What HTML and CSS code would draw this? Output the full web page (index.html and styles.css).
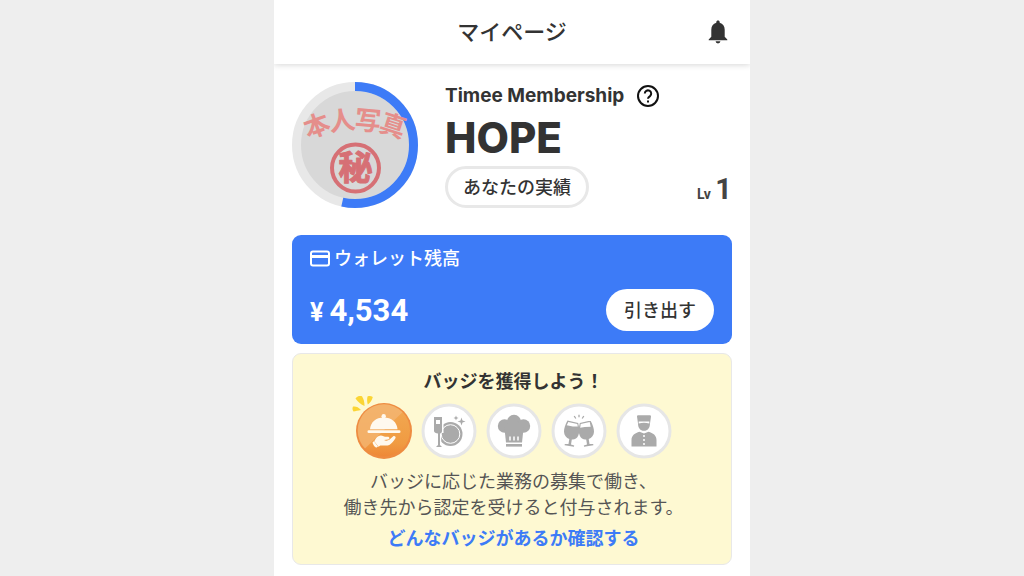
FILE: index.html
```html
<!DOCTYPE html>
<html lang="ja">
<head>
  <meta charset="UTF-8">
  <meta name="viewport" content="width=device-width, initial-scale=1">
  <title>マイページ</title>
  <link rel="stylesheet" href="styles.css">
</head>
<body>
  <div class="app">
    <header class="header">
      <h1 class="header-title">マイページ</h1>
      <button class="bell" type="button" aria-label="お知らせ">
        <svg viewBox="0 0 20 24" width="20" height="24">
          <path d="M10 0.5c1 0 1.700.7 1.700 1.700v.6c3.200.8 5 3.500 5 6.900v7.100l2.600 2.600v.9H.7v-.9l2.600-2.600V9.700c0-3.400 1.800-6.100 5-6.900v-.6c0-1 .7-1.700 1.700-1.700z M7.600 21.300h4.800a2.400 2.100 0 0 1-4.800 0z"/>
        </svg>
      </button>
    </header>

    <main class="content">
      <section class="profile">
        <svg class="avatar" viewBox="0 0 126 126" role="img" aria-label="本人写真">
          <circle class="avatar-photo" cx="63" cy="63" r="55"/>
          <circle class="avatar-track" cx="63" cy="63" r="58.500"/>
          <circle class="avatar-progress" cx="63" cy="63" r="58.500" pathLength="100" stroke-dasharray="53.500 100" transform="rotate(-90 63 63)"/>
          <g class="avatar-name">
            <text transform="translate(25 44) rotate(-20)" dy="9">本</text>
            <text transform="translate(50 39) rotate(-7)" dy="9">人</text>
            <text transform="translate(76 39) rotate(5)" dy="9">写</text>
            <text transform="translate(101 44) rotate(18)" dy="9">真</text>
          </g>
          <circle class="seal-ring" cx="63.500" cy="86" r="23.500"/>
          <text class="seal-text" x="63.500" y="98">秘</text>
        </svg>

        <div class="membership">
          <div class="membership-label">
            <span>Timee Membership</span>
            <button class="help" type="button" aria-label="ヘルプ">
              <svg viewBox="0 0 24 24" width="24" height="24">
                <circle cx="12" cy="12" r="10"/>
                <path d="M8.800 9.600a3.200 3.200 0 1 1 5.200 2.500c-1.200.9-2 1.500-2 2.700"/>
                <path d="M12 16.400v2"/>
              </svg>
            </button>
          </div>
          <p class="rank">HOPE</p>
          <button class="pill pill-outline" type="button">あなたの実績</button>
        </div>

        <p class="level"><span class="level-label">Lv</span> <span class="level-value">1</span></p>
      </section>

      <section class="wallet">
        <h2 class="wallet-title">
          <svg viewBox="0 0 20 18" width="20" height="18">
            <rect x="1" y="1.500" width="18" height="14" rx="2"/>
            <path class="card-stripe" d="M1 6.500h18"/>
          </svg>
          ウォレット残高
        </h2>
        <div class="wallet-row">
          <p class="amount"><span class="yen">¥</span>4,534</p>
          <button class="pill pill-white" type="button">引き出す</button>
        </div>
      </section>

      <section class="badges">
        <h2 class="badges-title">バッジを獲得しよう！</h2>
        <ul class="badge-list">
          <li class="badge badge-active">
            <svg viewBox="0 0 56 56" role="img" aria-label="ホール">
              <defs>
                <linearGradient id="orange" x1="0" y1="0" x2="0" y2="1">
                  <stop offset="0" stop-color="#f2a953"/>
                  <stop offset="0.750" stop-color="#f09b42"/>
                  <stop offset="1" stop-color="#ee8837"/>
                </linearGradient>
              </defs>
              <circle cx="28" cy="28" r="28" fill="#ee8c41"/>
              <circle cx="28" cy="27.500" r="26" fill="url(#orange)"/>
              <path d="M9 45.500A26 26 0 0 1 46.500 9.200z" fill="#f4b877" opacity="0.700"/>
              <g fill="#fff9ee">
                <circle cx="27.700" cy="13.300" r="2.200"/>
                <path d="M14 26.300C14.500 19 20 14.500 27.700 14.500S41 19 41.500 26.300z"/>
                <rect x="11.500" y="27.300" width="33" height="2.700" rx="1.300"/>
                <path d="M20 35.200c2.200-2.800 5-3.300 7.500-2 1.300.6 2.700.5 4.300.5 2 0 2.200 2.500.3 2.800l-4 .6c1.800 1 4 .6 5.500-.6l3.400-3c1.400-1.200 3.500.4 2.300 2-1.800 2.700-3.700 5.200-6 6.400-2.600 1.200-6.500.2-9 .6l-1.800 1.200-4.300-5.500z"/>
                <path d="M16.600 39.200l1.400-1 4 5.400-1.400 1c-1.800-.3-3.800-2.900-4-5.400z"/>
              </g>
            </svg>
            <svg class="sparkle" viewBox="0 0 22 18" width="22" height="18" aria-hidden="true">
              <path d="M1 11.500c2.700-.5 5.500.5 8 3.500-3 .6-5.500 1-7.500 1.500-1.200-1.500-1.300-3.500-.5-5z"/>
              <path d="M3.500 3.500C5.500 1 7.500.8 10 1.200c1.800 3 2.500 6 2.500 9.800-3.500-1.500-6.500-4-9-7.500z"/>
              <path d="M15.500 1.500c2-.7 3.700-.5 5.300.5-.8 3-2.300 5.500-5 7.500-.8-2.500-.9-5.200-.3-8z"/>
            </svg>
          </li>
          <li class="badge">
            <svg viewBox="0 0 56 56" role="img" aria-label="洗い場">
              <circle class="badge-ring" cx="28" cy="28" r="26"/>
              <g class="badge-icon">
                <circle cx="29.500" cy="31" r="12"/>
                <circle cx="29.500" cy="31" r="9.300" fill="none" stroke="#fff" stroke-width="1"/>
                <path d="M11.500 13h11v17h-2.300v15h-6.400V30h-2.300z" fill="#fff"/>
                <path d="M13 14h8v14c0 1.500-1 2.300-2 2.600V42l2 2h-6l2-2V30.600c-2-.3-4-1.100-4-2.600z"/>
                <rect x="15" y="17" width="4" height="4" fill="#fff"/>
                <path d="M35 12.500l.7 1.800 1.800.7-1.800.7-.7 1.800-.7-1.800-1.800-.7 1.800-.7z"/>
                <path d="M40.500 14.500l1 3 3 1-3 1-1 3-1-3-3-1 3-1z"/>
              </g>
            </svg>
          </li>
          <li class="badge">
            <svg viewBox="0 0 56 56" role="img" aria-label="調理">
              <circle class="badge-ring" cx="28" cy="28" r="26"/>
              <g class="badge-icon">
                <circle cx="18.500" cy="23" r="6.700"/>
                <circle cx="28" cy="19" r="7.200"/>
                <circle cx="37.500" cy="23" r="6.700"/>
                <path d="M18 21h20l-2 18.500H20z"/>
                <rect x="20" y="41" width="16" height="2.600"/>
                <path d="M24 33.500v4M28 33.500v4M32 33.500v4" stroke="#fff" stroke-width="1.500"/>
              </g>
            </svg>
          </li>
          <li class="badge">
            <svg viewBox="0 0 56 56" role="img" aria-label="ドリンク">
              <circle class="badge-ring" cx="28" cy="28" r="26"/>
              <g class="badge-icon">
                <path d="M16.500 17.500l10.700 2.400c1.300 5.500 1.300 9.500.2 12.300-1.300 3.300-4 4.600-6.600 4.200l-.8 5 3.200 1.100-.3 1.200-9.300-1.500.2-1.200 3.700.1.800-5.200c-3-1-5.200-3.500-5.300-7.200-.1-3.300 1.300-7 3.500-11.200z"/>
                <path d="M39.500 17.500l-10.700 2.400c-1.300 5.500-1.300 9.500-.2 12.300 1.300 3.300 4 4.600 6.600 4.200l.8 5-3.200 1.100.3 1.200 9.300-1.500-.2-1.200-3.700.1-.8-5.200c3-1 5.200-3.500 5.300-7.200.1-3.300-1.300-7-3.500-11.200z"/>
                <path d="M17.300 19l9 2 .5 2.500-5 .1-6-1.300zM38.700 19l-9 2-.5 3.700 4.500-.8 6-.2z" fill="#fff"/>
                <path d="M23.200 13l1.600 2.500M28 11.800v2.500M32.800 13l-1.600 2.500" fill="none" stroke="#aaa" stroke-width="1.300"/>
              </g>
            </svg>
          </li>
          <li class="badge">
            <svg viewBox="0 0 56 56" role="img" aria-label="ホテル">
              <circle class="badge-ring" cx="28" cy="28" r="26"/>
              <g class="badge-icon">
                <path d="M21 13.500c0-.8.600-1.300 1.300-1.300h11.400c.7 0 1.300.5 1.300 1.300l-1 7c0 4.500-2.300 7.300-6 7.300s-6-2.800-6-7.300z"/>
                <path d="M22.700 18.500h10.600v2c-3.500-.9-7.100-.9-10.600 0z" fill="#fff"/>
                <path d="M15.500 43.500V37c0-4.500 3.500-7 8-8.200l4.500 1.800 4.500-1.800c4.500 1.200 8 3.700 8 8.200v6.500z"/>
                <g fill="#fff">
                  <circle cx="28" cy="33" r="1"/>
                  <circle cx="28" cy="37" r="1"/>
                  <circle cx="28" cy="41" r="1"/>
                </g>
              </g>
            </svg>
          </li>
        </ul>
        <p class="badges-text">バッジに応じた業務の募集で働き、<br>働き先から認定を受けると付与されます。</p>
        <a class="badges-link" href="#">どんなバッジがあるか確認する</a>
      </section>
    </main>
  </div>
</body>
</html>
```
FILE: styles.css
```css
* { box-sizing: border-box; }
body { margin: 0; background-color: #eee; color: #333; font-family: Roboto, 'Noto Sans CJK JP', sans-serif; font-size: 18px; line-height: 26px; }
h1, h2, p, ul { margin: 0; padding: 0; }
button { border: 0; padding: 0; background: none; color: inherit; font: inherit; cursor: pointer; }
svg { display: block; }

.app { max-width: 476px; min-height: 100vh; margin: 0 auto; background-color: #fff; }

/* header */
.header { display: grid; grid-template-columns: 1fr auto 1fr; align-items: center; height: 64px; padding: 0 22px; box-shadow: 0 1px 6px rgba(0, 0, 0, 0.16); clip-path: inset(0 0 -8px 0); }
.header-title { grid-column: 2; padding-top: 2px; font-size: 22px; font-weight: 500; }
.bell { justify-self: end; fill: #333; }

.content { padding: 18px; }

/* profile */
.profile { display: flex; gap: 27px; margin-bottom: 27px; }
.avatar { flex: none; width: 126px; height: 126px; }
.avatar-photo { fill: #d8d8d8; }
.avatar-track { fill: none; stroke: #e8e8e8; stroke-width: 9; }
.avatar-progress { fill: none; stroke: #3d7bf7; stroke-width: 9; }
.avatar-name { fill: #e58e8b; font-size: 26px; font-weight: 700; text-anchor: middle; }
.seal-ring { fill: none; stroke: #d67075; stroke-width: 4; }
.seal-text { fill: #d67075; stroke: #d67075; stroke-width: 1; stroke-linejoin: round; font-size: 34px; font-weight: 700; text-anchor: middle; }
.membership { flex: 1; }
.membership-label { display: flex; align-items: center; gap: 12px; height: 28px; font-family: Inter, sans-serif; font-size: 19px; font-weight: 700; white-space: nowrap; }
.help svg { fill: none; stroke: #111; stroke-width: 2; }
.rank { font-family: Inter, sans-serif; font-size: 42px; font-weight: 800; line-height: 56px; }
.level { align-self: flex-end; padding-bottom: 1px; color: #444; white-space: nowrap; }
.level-label { font-size: 14px; font-weight: 700; }
.level-value { font-size: 29px; font-weight: 700; }

.pill { height: 42px; padding: 1px 18px 0; border-radius: 21px; background-color: #fff; font-weight: 500; white-space: nowrap; }
.pill-outline { padding: 1px 15px 0; border: 3px solid #e8e8e8; }

/* wallet */
.wallet { margin-bottom: 9px; padding: 11px 18px 13px; border-radius: 9px; background-color: #3d7bf7; color: #fff; }
.wallet-title { display: flex; align-items: center; gap: 4px; margin-bottom: 17px; font-size: 18px; font-weight: 500; }
.wallet-title svg { fill: none; stroke: #fff; stroke-width: 2; }
.wallet-title .card-stripe { stroke-width: 3; }
.wallet-row { display: flex; align-items: center; justify-content: space-between; }
.wallet .pill { color: #333; }
.amount { padding-top: 3px; font-size: 31px; font-weight: 700; }
.yen { margin-right: 6px; font-size: 25px; }

/* badges */
.badges { display: flex; flex-direction: column; align-items: center; padding: 15px 5px 12px 8px; border: 1px solid #e8e8e8; border-radius: 9px; background-color: #fef9d2; text-align: center; }
.badges-title { margin-bottom: 8px; font-size: 18px; font-weight: 700; }
.badge-list { display: flex; gap: 9px; margin-bottom: 10px; list-style: none; }
.badge { position: relative; width: 56px; height: 56px; }
.badge-ring { fill: #fff; stroke: #e6e6e6; stroke-width: 3; }
.badge-icon { fill: #aaa; }
.sparkle { position: absolute; top: -8px; left: -4px; fill: #fbd534; }
.badges-text { margin-bottom: 5px; color: #555; }
.badges-link { color: #3d7bf7; font-weight: 700; text-decoration: none; }
```
